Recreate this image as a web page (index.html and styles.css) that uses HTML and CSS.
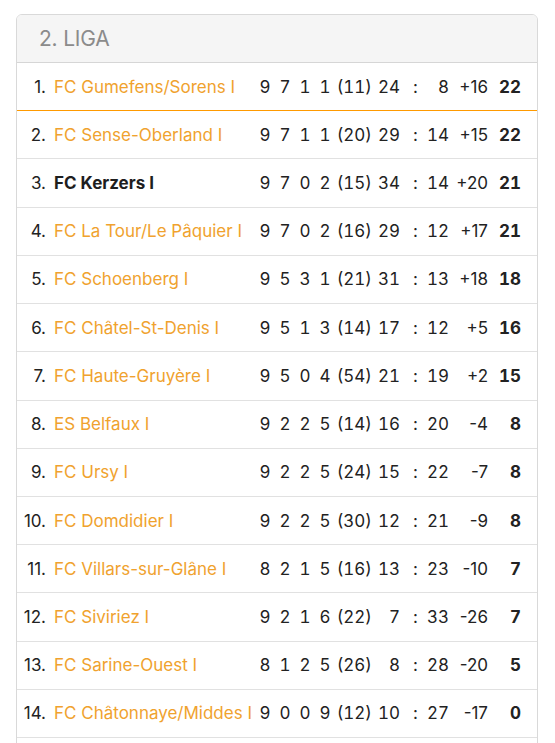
FILE: index.html
```html
<!DOCTYPE html>
<html lang="de">
<head>
<meta charset="utf-8">
<title>2. Liga</title>
<link rel="stylesheet" href="styles.css">
</head>
<body>
<div class="card">
  <div class="card-header">2. LIGA</div>
  <div class="table">
    <div class="row promo"><span class="rank">1.</span><span class="team">FC Gumefens/Sorens I</span><span class="n">9</span><span class="n">7</span><span class="n">1</span><span class="n">1</span><span class="pen">(11)</span><span class="gf">24</span><span class="colon">:</span><span class="ga">8</span><span class="diff">+16</span><span class="pts">22</span></div>
    <div class="row"><span class="rank">2.</span><span class="team">FC Sense-Oberland I</span><span class="n">9</span><span class="n">7</span><span class="n">1</span><span class="n">1</span><span class="pen">(20)</span><span class="gf">29</span><span class="colon">:</span><span class="ga">14</span><span class="diff">+15</span><span class="pts">22</span></div>
    <div class="row"><span class="rank">3.</span><span class="team own">FC Kerzers I</span><span class="n">9</span><span class="n">7</span><span class="n">0</span><span class="n">2</span><span class="pen">(15)</span><span class="gf">34</span><span class="colon">:</span><span class="ga">14</span><span class="diff">+20</span><span class="pts">21</span></div>
    <div class="row"><span class="rank">4.</span><span class="team">FC La Tour/Le Pâquier I</span><span class="n">9</span><span class="n">7</span><span class="n">0</span><span class="n">2</span><span class="pen">(16)</span><span class="gf">29</span><span class="colon">:</span><span class="ga">12</span><span class="diff">+17</span><span class="pts">21</span></div>
    <div class="row"><span class="rank">5.</span><span class="team">FC Schoenberg I</span><span class="n">9</span><span class="n">5</span><span class="n">3</span><span class="n">1</span><span class="pen">(21)</span><span class="gf">31</span><span class="colon">:</span><span class="ga">13</span><span class="diff">+18</span><span class="pts">18</span></div>
    <div class="row"><span class="rank">6.</span><span class="team">FC Châtel-St-Denis I</span><span class="n">9</span><span class="n">5</span><span class="n">1</span><span class="n">3</span><span class="pen">(14)</span><span class="gf">17</span><span class="colon">:</span><span class="ga">12</span><span class="diff">+5</span><span class="pts">16</span></div>
    <div class="row"><span class="rank">7.</span><span class="team">FC Haute-Gruyère I</span><span class="n">9</span><span class="n">5</span><span class="n">0</span><span class="n">4</span><span class="pen">(54)</span><span class="gf">21</span><span class="colon">:</span><span class="ga">19</span><span class="diff">+2</span><span class="pts">15</span></div>
    <div class="row"><span class="rank">8.</span><span class="team">ES Belfaux I</span><span class="n">9</span><span class="n">2</span><span class="n">2</span><span class="n">5</span><span class="pen">(14)</span><span class="gf">16</span><span class="colon">:</span><span class="ga">20</span><span class="diff">-4</span><span class="pts">8</span></div>
    <div class="row"><span class="rank">9.</span><span class="team">FC Ursy I</span><span class="n">9</span><span class="n">2</span><span class="n">2</span><span class="n">5</span><span class="pen">(24)</span><span class="gf">15</span><span class="colon">:</span><span class="ga">22</span><span class="diff">-7</span><span class="pts">8</span></div>
    <div class="row"><span class="rank">10.</span><span class="team">FC Domdidier I</span><span class="n">9</span><span class="n">2</span><span class="n">2</span><span class="n">5</span><span class="pen">(30)</span><span class="gf">12</span><span class="colon">:</span><span class="ga">21</span><span class="diff">-9</span><span class="pts">8</span></div>
    <div class="row"><span class="rank">11.</span><span class="team">FC Villars-sur-Glâne I</span><span class="n">8</span><span class="n">2</span><span class="n">1</span><span class="n">5</span><span class="pen">(16)</span><span class="gf">13</span><span class="colon">:</span><span class="ga">23</span><span class="diff">-10</span><span class="pts">7</span></div>
    <div class="row"><span class="rank">12.</span><span class="team">FC Siviriez I</span><span class="n">9</span><span class="n">2</span><span class="n">1</span><span class="n">6</span><span class="pen">(22)</span><span class="gf">7</span><span class="colon">:</span><span class="ga">33</span><span class="diff">-26</span><span class="pts">7</span></div>
    <div class="row"><span class="rank">13.</span><span class="team">FC Sarine-Ouest I</span><span class="n">8</span><span class="n">1</span><span class="n">2</span><span class="n">5</span><span class="pen">(26)</span><span class="gf">8</span><span class="colon">:</span><span class="ga">28</span><span class="diff">-20</span><span class="pts">5</span></div>
    <div class="row"><span class="rank">14.</span><span class="team">FC Châtonnaye/Middes I</span><span class="n">9</span><span class="n">0</span><span class="n">0</span><span class="n">9</span><span class="pen">(12)</span><span class="gf">10</span><span class="colon">:</span><span class="ga">27</span><span class="diff">-17</span><span class="pts">0</span></div>
  </div>
</div>
</body>
</html>
```

FILE: styles.css
```css
html, body {
  margin: 0;
  padding: 0;
  background: #ffffff;
}

body {
  font-family: Inter, "Liberation Sans", Arial, sans-serif;
  color: #222222;
  font-size: 17px;
}

.card {
  margin: 14px 17px 0 16px;
  border: 1px solid #d9d9d9;
  border-radius: 6px;
  overflow: hidden;
}

.card-header {
  height: 47px;
  display: flex;
  align-items: center;
  padding-left: 22px;
  background: #f5f5f5;
  border-bottom: 1px solid #d6d6d6;
  color: #8b8b8b;
  font-size: 21px;
  letter-spacing: -0.2px;
}

.table {
  padding-bottom: 24px;
}

.row {
  box-sizing: border-box;
  height: 48.23px;
  display: grid;
  grid-template-columns: 30px 208px 20px 20px 20px 20px 38px 27px 25px 24px 40px 32px;
  padding-right: 16px;
  align-items: center;
  border-bottom: 1px solid #e1e1e1;
  white-space: nowrap;
}

.row.promo {
  border-bottom-color: #ff9a00;
}

.rank {
  text-align: right;
  padding-right: 1px;
}

.team {
  padding-left: 7px;
  color: #f0a22e;
}

.team.own {
  color: #1e1e1e;
  font-weight: 700;
}

.n,
.pen,
.gf,
.ga,
.pts {
  font-variant-numeric: tabular-nums;
}

.n {
  text-align: center;
}

.pen {
  text-align: right;
  padding-right: 1px;
}

.gf {
  text-align: right;
}

.colon {
  text-align: center;
  padding-left: 6px;
}

.ga {
  text-align: right;
}

.diff {
  text-align: right;
  padding-right: 1px;
}

.pts {
  text-align: right;
  font-weight: 700;
}
```
